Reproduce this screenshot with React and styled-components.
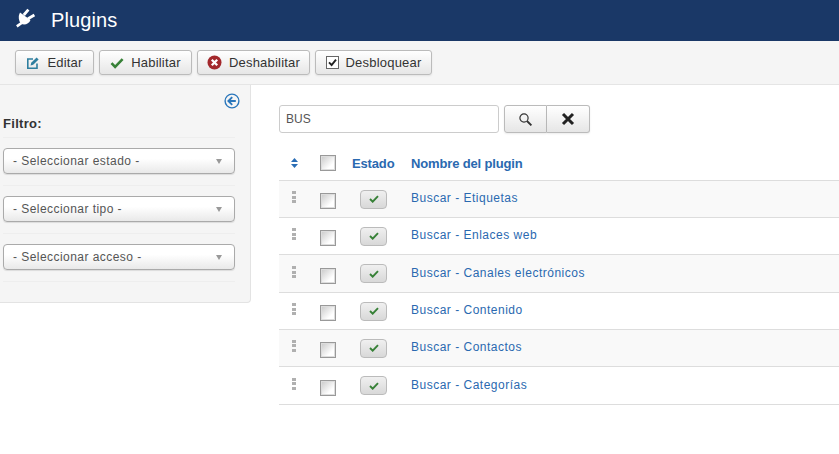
import React from "react";
import styled, { createGlobalStyle } from "styled-components";

const GlobalStyle = createGlobalStyle`
    html, body {
        margin: 0;
        padding: 0;
        background: #fff;
    }
    body {
        font-family: "Liberation Sans", Arial, sans-serif;
        font-size: 12px;
        color: #333;
        overflow: hidden;
    }
`;

const ACTIONS = [
    { label: "Editar", icon: "edit", width: 79 },
    { label: "Habilitar", icon: "check", width: 93 },
    { label: "Deshabilitar", icon: "cancel", width: 113 },
    { label: "Desbloquear", icon: "box", width: 117 },
];

const FILTERS = ["- Seleccionar estado -", "- Seleccionar tipo -", "- Seleccionar acceso -"];

const PLUGINS = [
    { name: "Buscar - Etiquetas", height: 37 },
    { name: "Buscar - Enlaces web", height: 37 },
    { name: "Buscar - Canales electrónicos", height: 38 },
    { name: "Buscar - Contenido", height: 37 },
    { name: "Buscar - Contactos", height: 37 },
    { name: "Buscar - Categorías", height: 38 },
];

const PlugIcon = () => (
    <PlugSvg width="21" height="20" viewBox="0 0 21 20">
        <path d="M5 4.5L15.5 12C14 16 9 18 6 15.5C3.5 13 3 8 5 4.5z" fill="#fff" />
        <path d="M8 14L1.8 18.4" fill="none" stroke="#fff" strokeWidth="2.6" />
        <path d="M8.8 7L13.4 1.6M13 10.8L19.4 7" fill="none" stroke="#fff" strokeWidth="2.8" />
    </PlugSvg>
);

const ActionIcon = ({ type }) => {
    if (type === "edit") {
        return (
            <svg width="14" height="14" viewBox="0 0 14 14">
                <path d="M11 7.5V12.2H1.8V3H7" fill="none" stroke="#2f7f9f" strokeWidth="1.6" />
                <path d="M4.6 9.4l.6-2.6L10.6 1.4l2 2L7.2 8.8z" fill="#2f7f9f" />
            </svg>
        );
    }
    if (type === "check") {
        return (
            <svg width="14" height="12" viewBox="0 0 14 12">
                <path d="M1.5 6.2l3.6 3.6L12.6 2.2" fill="none" stroke="#378137" strokeWidth="2.6" />
            </svg>
        );
    }
    if (type === "cancel") {
        return (
            <svg width="15" height="15" viewBox="0 0 15 15">
                <circle cx="7.5" cy="7.5" r="7" fill="#a3282c" />
                <path d="M4.8 4.8l5.4 5.4M10.2 4.8l-5.4 5.4" stroke="#fff" strokeWidth="2.3" />
            </svg>
        );
    }
    return (
        <svg width="13" height="13" viewBox="0 0 13 13">
            <rect x="0.5" y="0.5" width="12" height="12" fill="#fff" stroke="#666" />
            <path d="M3 6.4l2.6 2.6L10 3.6" fill="none" stroke="#222" strokeWidth="1.9" />
        </svg>
    );
};

const App = () => {
    return (
        <>
            <GlobalStyle />
            <Header>
                <PlugIcon />
                <HeaderTitle>Plugins</HeaderTitle>
            </Header>
            <Toolbar>
                {ACTIONS.map(action => (
                    <ToolButton key={action.label} $width={action.width}>
                        <ActionIcon type={action.icon} />
                        <span>{action.label}</span>
                    </ToolButton>
                ))}
            </Toolbar>
            <Main>
                <Sidebar>
                    <CollapseRow>
                        <svg width="16" height="16" viewBox="0 0 16 16">
                            <circle cx="8" cy="8" r="6.9" fill="none" stroke="#2a76bb" strokeWidth="1.4" />
                            <path d="M8.2 4.2L4.4 8l3.8 3.8M4.6 8h7.2" fill="none" stroke="#2a76bb" strokeWidth="1.9" />
                        </svg>
                    </CollapseRow>
                    <FilterTitle>Filtro:</FilterTitle>
                    {FILTERS.map(filter => (
                        <FilterBlock key={filter}>
                            <FilterSelect>
                                <span>{filter}</span>
                                <Caret />
                            </FilterSelect>
                        </FilterBlock>
                    ))}
                </Sidebar>
                <Content>
                    <SearchBar>
                        <SearchInput value="BUS" readOnly />
                        <SearchButton $first>
                            <svg width="15" height="15" viewBox="0 0 15 15">
                                <circle cx="6" cy="6" r="4.1" fill="none" stroke="#333" strokeWidth="1.2" />
                                <path d="M9 9l4.4 4.4" stroke="#333" strokeWidth="1.9" />
                            </svg>
                        </SearchButton>
                        <SearchButton>
                            <svg width="14" height="14" viewBox="0 0 14 14">
                                <path d="M2 2l10 10M12 2L2 12" stroke="#222" strokeWidth="3" />
                            </svg>
                        </SearchButton>
                    </SearchBar>
                    <PluginTable>
                        <HeadRow>
                            <OrderCell>
                                <svg width="7" height="10" viewBox="0 0 7 10">
                                    <path d="M3.5 0L7 4H0zM0 6h7L3.5 10z" fill="#2a6db5" />
                                </svg>
                            </OrderCell>
                            <CheckCell>
                                <CheckBox />
                            </CheckCell>
                            <StateCell $head>
                                <HeadLink>Estado</HeadLink>
                            </StateCell>
                            <HeadLink>Nombre del plugin</HeadLink>
                        </HeadRow>
                        {PLUGINS.map((plugin, index) => (
                            <Row key={plugin.name} $height={plugin.height} $odd={index % 2 === 0}>
                                <OrderCell>
                                    <Grip />
                                </OrderCell>
                                <CheckCell>
                                    <CheckBox $low />
                                </CheckCell>
                                <StateCell>
                                    <StateButton>
                                        <svg width="10" height="8" viewBox="0 0 10 8">
                                            <path d="M1 4l2.7 2.7L9 1.2" fill="none" stroke="#378137" strokeWidth="1.9" />
                                        </svg>
                                    </StateButton>
                                </StateCell>
                                <PluginName>{plugin.name}</PluginName>
                            </Row>
                        ))}
                    </PluginTable>
                </Content>
            </Main>
        </>
    );
};

export default App;

const Header = styled.header`
    height: 41px;
    background: #1a3867;
    display: flex;
    align-items: center;
    padding-left: 15px;
    gap: 15px;
    box-sizing: border-box;
`;

const PlugSvg = styled.svg`
    margin-bottom: 6px;
`;

const HeaderTitle = styled.h1`
    margin: 0;
    font-size: 20px;
    font-weight: 400;
    color: #fff;
    letter-spacing: 0.1px;
`;

const Toolbar = styled.div`
    height: 44px;
    box-sizing: border-box;
    background: #f5f5f5;
    border-bottom: 1px solid #e5e5e5;
    display: flex;
    align-items: flex-start;
    padding: 9px 0 0 15px;
    gap: 5px;
`;

const ToolButton = styled.button`
    width: ${props => props.$width}px;
    height: 25px;
    padding: 0;
    box-sizing: border-box;
    display: flex;
    align-items: center;
    justify-content: center;
    gap: 7px;
    font-family: inherit;
    font-size: 13px;
    letter-spacing: 0.2px;
    color: #333;
    background: linear-gradient(#fff, #e6e6e6);
    border: 1px solid #bbb;
    border-radius: 3px;
    box-shadow: 0 1px 2px rgba(0, 0, 0, 0.08);
`;

const Main = styled.div`
    display: flex;
    align-items: flex-start;
`;

const Sidebar = styled.aside`
    width: 251px;
    height: 218px;
    box-sizing: border-box;
    flex-shrink: 0;
    background: #f5f5f5;
    border-right: 1px solid #e3e3e3;
    border-bottom: 1px solid #e3e3e3;
    border-bottom-right-radius: 4px;
    padding: 0 15px 0 3px;
`;

const CollapseRow = styled.div`
    height: 24px;
    margin-right: -5px;
    display: flex;
    justify-content: flex-end;
    align-items: flex-end;
`;

const FilterTitle = styled.div`
    height: 29px;
    line-height: 30px;
    box-sizing: border-box;
    font-size: 13px;
    font-weight: 700;
    letter-spacing: 0.3px;
    color: #333;
    border-bottom: 1px solid #eee;
`;

const FilterBlock = styled.div`
    height: 48px;
    box-sizing: border-box;
    padding-top: 10px;
    border-bottom: 1px solid #eee;
`;

const FilterSelect = styled.div`
    height: 26px;
    box-sizing: border-box;
    display: flex;
    align-items: center;
    justify-content: space-between;
    padding: 0 12px 0 9px;
    font-size: 12px;
    letter-spacing: 0.45px;
    color: #555;
    background: linear-gradient(#fff 40%, #e9e9e9);
    border: 1px solid #aaa;
    border-radius: 4px;
    box-shadow: 0 1px 1px rgba(0, 0, 0, 0.1);
`;

const Caret = styled.i`
    width: 0;
    height: 0;
    border-left: 3.5px solid transparent;
    border-right: 3.5px solid transparent;
    border-top: 5px solid #999;
`;

const Content = styled.main`
    flex: 1;
    padding: 20px 0 0 28px;
`;

const SearchBar = styled.div`
    display: flex;
    align-items: flex-start;
`;

const SearchInput = styled.input`
    width: 220px;
    height: 28px;
    box-sizing: border-box;
    margin-right: 5px;
    padding: 0 6px;
    font-family: inherit;
    font-size: 12px;
    color: #555;
    background: #fff;
    border: 1px solid #ccc;
    border-radius: 3px;
    outline: none;
`;

const SearchButton = styled.button`
    width: 43px;
    height: 28px;
    padding: 0;
    display: flex;
    align-items: center;
    justify-content: center;
    box-sizing: border-box;
    background: linear-gradient(#fff, #e6e6e6);
    border: 1px solid #bbb;
    border-left-width: ${props => (props.$first ? 1 : 0)}px;
    border-radius: ${props => (props.$first ? "3px 0 0 3px" : "0 3px 3px 0")};
    box-shadow: 0 1px 2px rgba(0, 0, 0, 0.08);
`;

const PluginTable = styled.div`
    margin-top: 19px;
`;

const HeadRow = styled.div`
    height: 29px;
    box-sizing: border-box;
    padding-bottom: 6px;
    display: flex;
    align-items: center;
    border-bottom: 1px solid #ddd;
`;

const Row = styled.div`
    height: ${props => props.$height}px;
    box-sizing: border-box;
    display: flex;
    align-items: center;
    background: ${props => (props.$odd ? "#f9f9f9" : "#fff")};
    border-bottom: 1px solid #ddd;
`;

const OrderCell = styled.div`
    width: 30px;
    display: flex;
    justify-content: center;
`;

const CheckCell = styled.div`
    width: 39px;
    padding-left: 11px;
    box-sizing: border-box;
    display: flex;
`;

const StateCell = styled.div`
    width: 63px;
    display: flex;
    justify-content: flex-start;
    padding-left: ${props => (props.$head ? 4 : 12)}px;
    box-sizing: border-box;
`;

const CheckBox = styled.span`
    display: block;
    width: 16px;
    height: 16px;
    box-sizing: border-box;
    background: linear-gradient(135deg, #c8c8c8, #fff 70%);
    border: 1px solid #999;
    box-shadow: inset 0 0 0 1px #ddd;
    position: relative;
    top: ${props => (props.$low ? 2 : 0)}px;
`;

const Grip = styled.span`
    display: block;
    width: 4px;
    height: 12px;
    position: relative;
    top: -2px;
    background: repeating-linear-gradient(#b0b0b0 0 3px, transparent 3px 4.5px);
`;

const StateButton = styled.span`
    width: 27px;
    height: 19px;
    box-sizing: border-box;
    display: flex;
    align-items: center;
    justify-content: center;
    background: linear-gradient(#f0f0f0, #d8d8d8);
    border: 1px solid #bbb;
    border-radius: 4px;
`;

const HeadLink = styled.span`
    font-size: 13px;
    font-weight: 700;
    letter-spacing: -0.15px;
    color: #2a69b0;
`;

const PluginName = styled.span`
    font-size: 12px;
    letter-spacing: 0.5px;
    color: #2a69b0;
    position: relative;
    top: -1px;
`;
